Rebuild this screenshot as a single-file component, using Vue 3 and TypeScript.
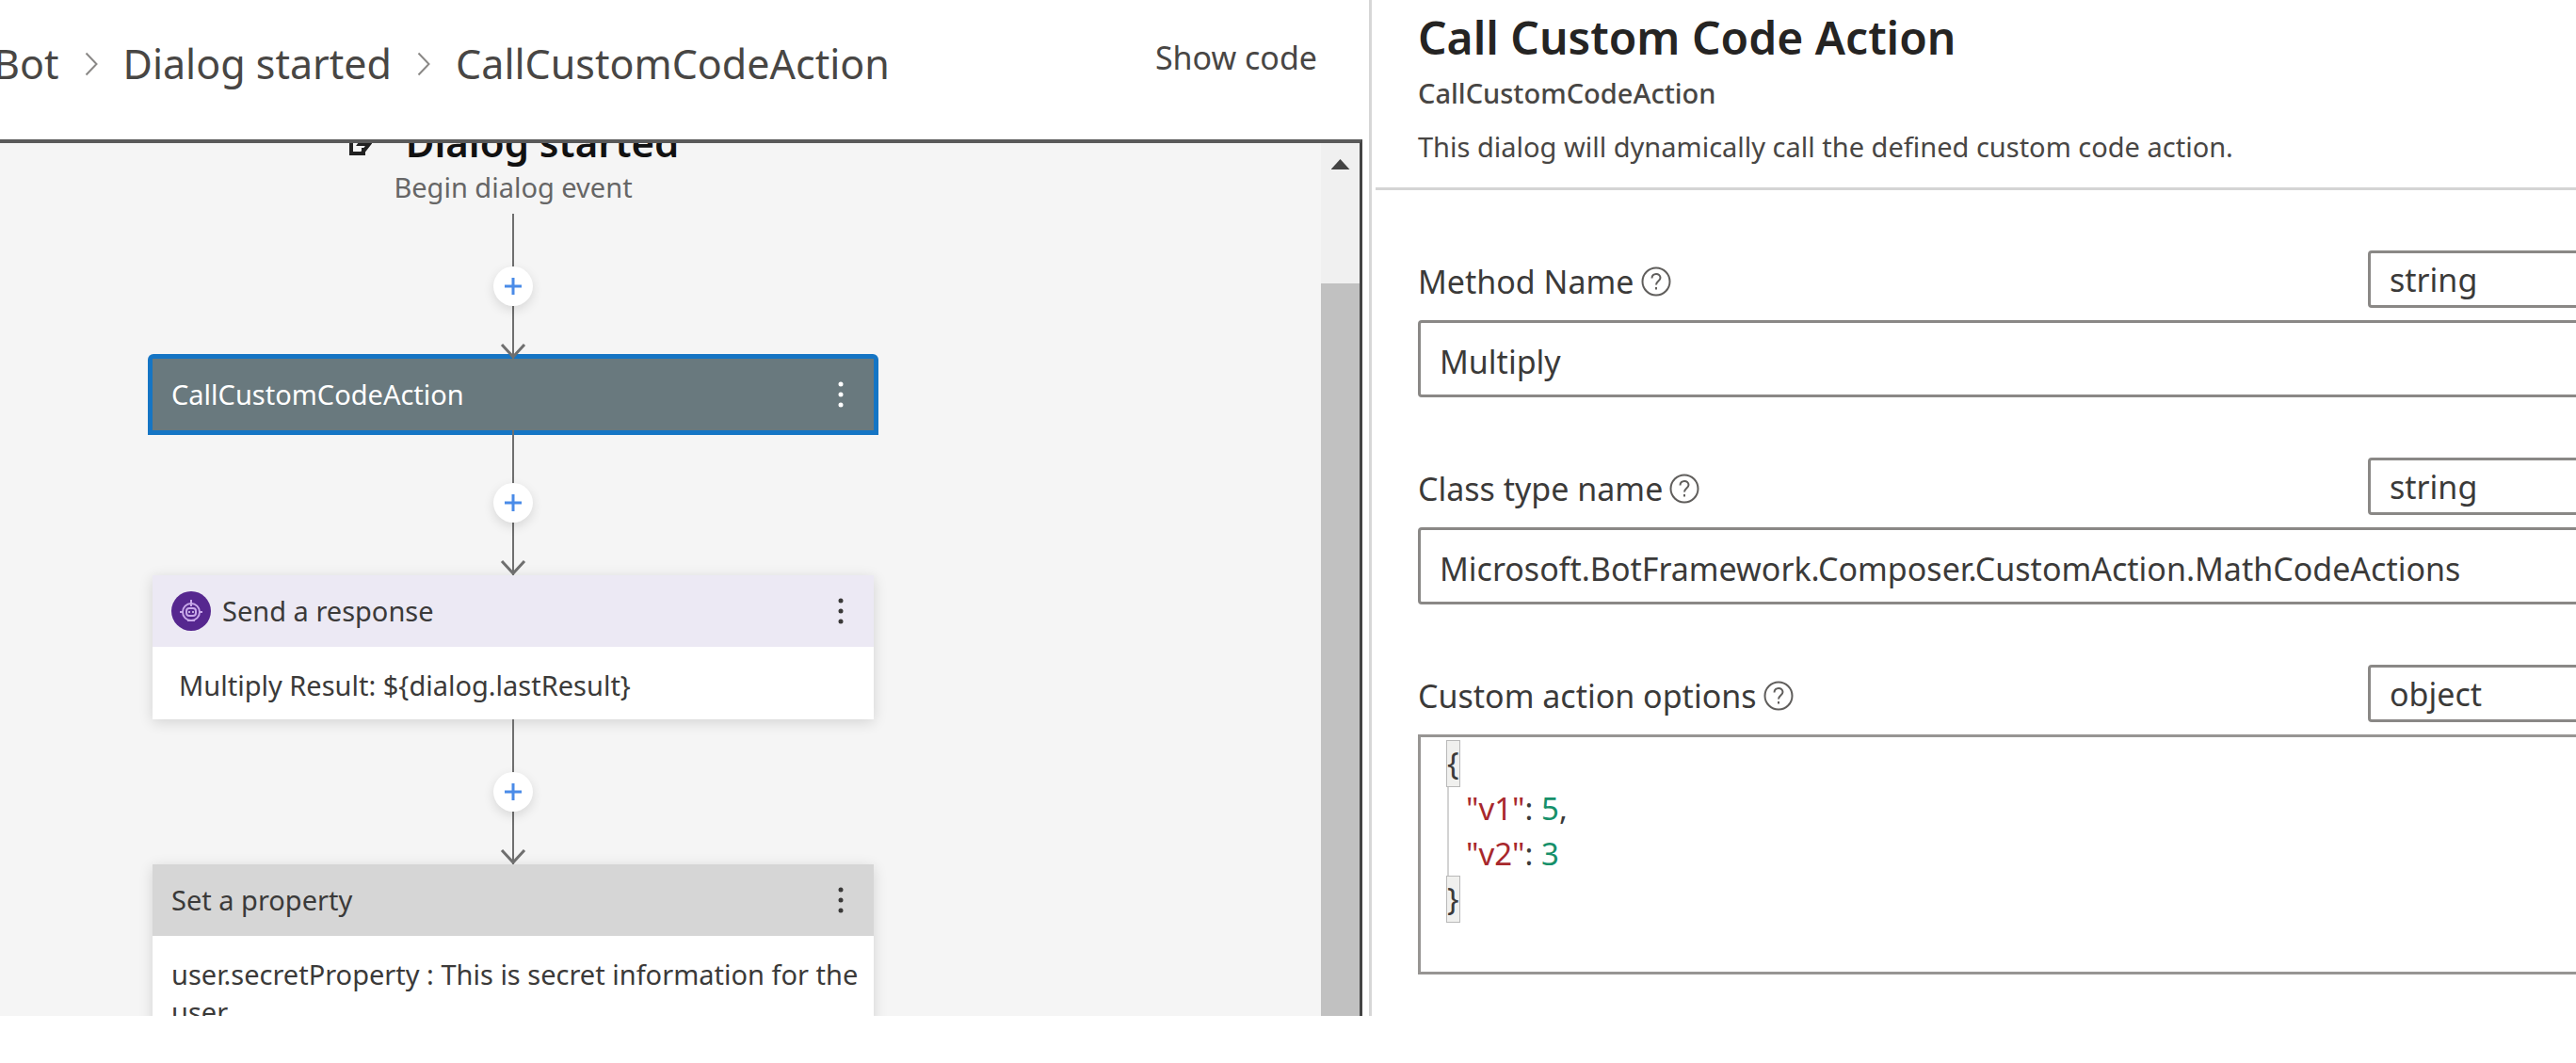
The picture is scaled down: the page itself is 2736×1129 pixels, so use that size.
<script setup lang="ts">
import { ref } from 'vue'

interface FlowNode {
  id: string
  title: string
  kind: 'custom' | 'response' | 'property'
  body?: string
}

interface TextField {
  id: string
  label: string
  type: string
  value: string
}

const crumbs = ['Bot', 'Dialog started', 'CallCustomCodeAction']

const nodes: FlowNode[] = [
  { id: 'call', title: 'CallCustomCodeAction', kind: 'custom' },
  { id: 'send', title: 'Send a response', kind: 'response', body: 'Multiply Result: ${dialog.lastResult}' },
  {
    id: 'set',
    title: 'Set a property',
    kind: 'property',
    body: 'user.secretProperty : This is secret information for the user',
  },
]

const selected = ref('call')

const fields = ref<TextField[]>([
  { id: 'method', label: 'Method Name', type: 'string', value: 'Multiply' },
  {
    id: 'class',
    label: 'Class type name',
    type: 'string',
    value: 'Microsoft.BotFramework.Composer.CustomAction.MathCodeActions',
  },
])

const optionsType = ref('object')
const types = ['string', 'object', 'expression']
</script>

<template>
  <main class="composer">
    <section class="flow">
      <header class="flow-header">
        <nav class="crumbs" aria-label="Breadcrumb">
          <template v-for="(crumb, i) in crumbs" :key="crumb">
            <svg v-if="i > 0" class="chevron" viewBox="0 0 14 26" aria-hidden="true">
              <path d="M1.5 1.5 L12.5 13 L1.5 24.5" />
            </svg>
            <a href="#" class="crumb">{{ crumb }}</a>
          </template>
        </nav>
        <button type="button" class="show-code">Show code</button>
      </header>

      <div class="canvas">
        <div class="diagram">
          <div class="trigger">
            <h2 class="trigger-title">
              <svg class="trigger-icon" viewBox="0 0 26 32" aria-hidden="true">
                <path d="M4 10 H11 M4 9 V28 H17 V22" />
                <path d="M24 3 L13 18 H23 L16 27" />
              </svg>
              <span>Dialog started</span>
            </h2>
            <p class="trigger-sub">Begin dialog event</p>
          </div>

          <template v-for="node in nodes" :key="node.id">
            <div class="connector">
              <svg class="arrow" viewBox="0 0 28 16" aria-hidden="true">
                <path d="M2 1 L14 14 L26 1" />
              </svg>
              <button type="button" class="add" :aria-label="'Add before ' + node.title">
                <svg viewBox="0 0 18 18" aria-hidden="true"><path d="M9 0 V18 M0 9 H18" /></svg>
              </button>
            </div>
            <article class="node" :class="[node.kind, { selected: selected === node.id }]" @click="selected = node.id">
              <div class="node-head">
                <svg v-if="node.kind === 'response'" class="bot" viewBox="0 0 42 42" aria-hidden="true">
                  <circle cx="21" cy="21" r="21" fill="#56278f" />
                  <g fill="none" stroke="#c9a9ea" stroke-width="2">
                    <circle cx="21" cy="22" r="9" />
                    <path d="M21 9 V16 M9 22 H13 M29 22 H33 M17 31 H25" />
                    <rect x="16" y="18" width="10" height="8" rx="3" />
                  </g>
                  <circle cx="19" cy="22" r="1" fill="#e6d6f7" />
                  <circle cx="23" cy="22" r="1" fill="#e6d6f7" />
                </svg>
                <h3 class="node-title">{{ node.title }}</h3>
                <button type="button" class="more" :aria-label="'Menu for ' + node.title">
                  <svg viewBox="0 0 6 30" aria-hidden="true">
                    <circle cx="3" cy="4" r="2.5" /><circle cx="3" cy="15" r="2.5" /><circle cx="3" cy="26" r="2.5" />
                  </svg>
                </button>
              </div>
              <p v-if="node.body" class="node-body">{{ node.body }}</p>
            </article>
          </template>
        </div>

        <div class="scrollbar" aria-hidden="true">
          <div class="scroll-up"></div>
          <div class="thumb"></div>
        </div>
      </div>
    </section>

    <section class="props">
      <header class="props-header">
        <h1 class="props-title">Call Custom Code Action</h1>
        <p class="props-sub">CallCustomCodeAction</p>
        <p class="props-desc">This dialog will dynamically call the defined custom code action.</p>
      </header>

      <form class="fields" @submit.prevent>
        <div v-for="field in fields" :key="field.id" class="field">
          <div class="field-head">
            <label class="field-label" :for="field.id">{{ field.label }}</label>
            <svg class="help" viewBox="0 0 32 32" aria-hidden="true">
              <circle cx="16" cy="16" r="14.5" />
              <path d="M11.5 12.5 C11.5 6.5 20.5 6.5 20.5 12 C20.5 15.5 16 15.5 16 19.5 M16 22 V24.5" />
            </svg>
            <select v-model="field.type" class="type" :aria-label="field.label + ' type'">
              <option v-for="t in types" :key="t" :value="t">{{ t }}</option>
            </select>
          </div>
          <input :id="field.id" v-model="field.value" class="text" type="text" />
        </div>

        <div class="field">
          <div class="field-head">
            <span id="options-label" class="field-label">Custom action options</span>
            <svg class="help" viewBox="0 0 32 32" aria-hidden="true">
              <circle cx="16" cy="16" r="14.5" />
              <path d="M11.5 12.5 C11.5 6.5 20.5 6.5 20.5 12 C20.5 15.5 16 15.5 16 19.5 M16 22 V24.5" />
            </svg>
            <select v-model="optionsType" class="type" aria-label="Custom action options type">
              <option v-for="t in types" :key="t" :value="t">{{ t }}</option>
            </select>
          </div>
          <div
            class="editor"
            role="textbox"
            aria-multiline="true"
            aria-labelledby="options-label"
            contenteditable="true"
            spellcheck="false"
          >
            <div class="line"><span class="bracket">{</span></div>
            <div class="line inner"><span class="key">"v1"</span>: <span class="num">5</span>,</div>
            <div class="line inner"><span class="key">"v2"</span>: <span class="num">3</span></div>
            <div class="line"><span class="bracket">}</span></div>
          </div>
        </div>
      </form>
    </section>
  </main>
</template>

<style>
body {
  margin: 0;
  background: #fff;
}
</style>

<style scoped>
.composer,
.composer * {
  box-sizing: border-box;
}

.composer {
  display: grid;
  grid-template-columns: 1457fr 1279fr;
  height: calc(100vh - 50px);
  overflow: hidden;
  color: #3b3a39;
  font-family: 'Noto Sans', 'Open Sans', sans-serif;
}

h1,
h2,
h3,
p {
  margin: 0;
}

button,
input,
select {
  font-family: inherit;
  color: inherit;
}

button {
  padding: 0;
  border: 0;
  background: none;
  cursor: pointer;
}

/* Flow pane */
.flow {
  display: flex;
  flex-direction: column;
  min-width: 0;
  min-height: 0;
  padding-right: 7px;
  border-right: 3px solid #d6d6d6;
}

.flow-header {
  display: flex;
  flex: none;
  align-items: flex-start;
  justify-content: space-between;
  height: 148px;
  padding: 38px 48px 0 0;
}

.crumbs {
  display: flex;
  align-items: center;
  margin-left: -7px;
}

.crumb {
  color: #484644;
  font-size: 43px;
  line-height: 60px;
  text-decoration: none;
  white-space: nowrap;
}

.chevron {
  width: 14px;
  height: 26px;
  margin: 0 27px;
}

.chevron path {
  fill: none;
  stroke: #8a8886;
  stroke-width: 2;
}

.show-code {
  color: #484644;
  font-size: 34px;
  line-height: 46px;
}

.canvas {
  display: flex;
  flex: 1;
  min-height: 0;
  overflow: hidden;
  border-top: 4px solid #5a5a5a;
  border-right: 3px solid #444;
  background: #f5f5f5;
}

.diagram {
  display: flex;
  flex: 1;
  flex-direction: column;
  align-items: flex-start;
  padding-left: 162px;
}

.trigger {
  display: flex;
  flex: none;
  flex-direction: column;
  align-items: center;
  width: 766px;
  margin-top: -29px;
  padding-bottom: 8px;
}

.trigger-title {
  display: flex;
  align-items: center;
  gap: 36px;
  color: #111;
  font-size: 42px;
  font-weight: 600;
  line-height: 56px;
}

.trigger-icon {
  width: 26px;
  height: 32px;
}

.trigger-icon path {
  fill: none;
  stroke: #222;
  stroke-width: 4;
}

.trigger-sub {
  color: #666;
  font-size: 29px;
  line-height: 40px;
}

.connector {
  display: flex;
  position: relative;
  z-index: 1;
  flex: none;
  flex-direction: column;
  align-items: center;
  width: 766px;
  height: 154px;
  padding-top: 56px;
  background: linear-gradient(#6f6f6f, #6f6f6f) center / 2px 100% no-repeat;
}

.add {
  display: flex;
  align-items: center;
  justify-content: center;
  width: 42px;
  height: 42px;
  border-radius: 50%;
  background: #fff;
  box-shadow: 0 4px 12px rgba(0, 0, 0, 0.12);
}

.add svg {
  width: 18px;
  height: 18px;
}

.add path {
  stroke: #4a8be8;
  stroke-width: 3;
}

.arrow {
  position: absolute;
  bottom: 0;
  width: 28px;
  height: 16px;
}

.arrow path {
  fill: none;
  stroke: #6f6f6f;
  stroke-width: 3;
}

.node {
  flex: none;
  width: 766px;
  background: #fff;
  box-shadow: 0 3px 14px rgba(0, 0, 0, 0.14);
}

.node.selected {
  border-radius: 2px 2px 0 0;
  box-shadow: 0 0 0 5px #1575c4;
}

.node-head {
  display: flex;
  align-items: center;
  height: 76px;
  padding: 0 32px 0 20px;
}

.custom .node-head {
  background: #69797e;
  color: #fff;
}

.response .node-head {
  background: #ece9f4;
}

.property .node-head {
  background: #d6d6d6;
}

.bot {
  width: 42px;
  height: 42px;
  margin-right: 12px;
}

.node-title {
  flex: 1;
  font-size: 29px;
  font-weight: 400;
  line-height: 40px;
}

.more {
  display: flex;
  width: 6px;
  height: 30px;
}

.more svg {
  width: 6px;
  height: 30px;
  fill: currentColor;
}

.node-body {
  padding: 21px 12px 16px 20px;
  font-size: 29px;
  line-height: 40px;
}

.response .node-body {
  padding-left: 28px;
}

.scrollbar {
  display: flex;
  flex: none;
  flex-direction: column;
  align-items: center;
  width: 41px;
  padding-top: 17px;
  background: #f0f0f0;
}

.scroll-up {
  width: 20px;
  height: 11px;
  margin-bottom: 121px;
  background: #444;
  clip-path: polygon(50% 0, 100% 100%, 0 100%);
}

.thumb {
  flex: 1;
  width: 100%;
  background: #c1c1c1;
}

/* Properties pane */
.props {
  min-width: 0;
  padding-left: 4px;
  overflow: hidden;
}

.props-header {
  height: 202px;
  padding: 6px 0 0 45px;
  border-bottom: 3px solid #d4d4d4;
}

.props-title {
  color: #252423;
  font-size: 48px;
  font-weight: 600;
  line-height: 68px;
}

.props-sub,
.props-desc {
  color: #484644;
  font-size: 29px;
  white-space: nowrap;
}

.props-sub {
  font-weight: 500;
  line-height: 50px;
}

.props-desc {
  line-height: 64px;
}

.fields {
  display: flex;
  flex-direction: column;
  gap: 64px;
  margin-right: -64px;
  padding: 64px 0 0 45px;
}

.field {
  display: flex;
  flex-direction: column;
  gap: 13px;
}

.field-head {
  display: flex;
  align-items: center;
  height: 61px;
}

.field-label {
  padding-top: 5px;
  font-size: 34px;
  line-height: 46px;
}

.help {
  width: 32px;
  height: 32px;
  margin-top: 4px;
  margin-left: 7px;
}

.help path,
.help circle {
  fill: none;
  stroke: #605e5c;
  stroke-width: 2;
}

.type {
  width: 285px;
  height: 61px;
  margin-left: auto;
  padding: 0 20px;
  border: 3px solid #8a8886;
  border-radius: 4px;
  appearance: none;
  background: #fff;
  font-size: 34px;
}

.text {
  width: 100%;
  height: 82px;
  padding: 5px 20px 0;
  border: 3px solid #8a8886;
  border-radius: 4px;
  background: #fff;
  font-size: 34px;
}

.editor {
  height: 255px;
  padding: 4px 28px;
  border: 3px solid #979593;
  background: #fff;
  font-size: 33px;
  line-height: 48px;
  outline: none;
}

.line {
  height: 48px;
}

.inner {
  padding-left: 18px;
  border-left: 2px solid #d3d3d3;
}

.bracket {
  display: inline-block;
  height: 48px;
  background: #f0f0ee;
  outline: 1px solid #b9b9b9;
}

.key {
  color: #a8282c;
}

.num {
  color: #16906a;
}
</style>
